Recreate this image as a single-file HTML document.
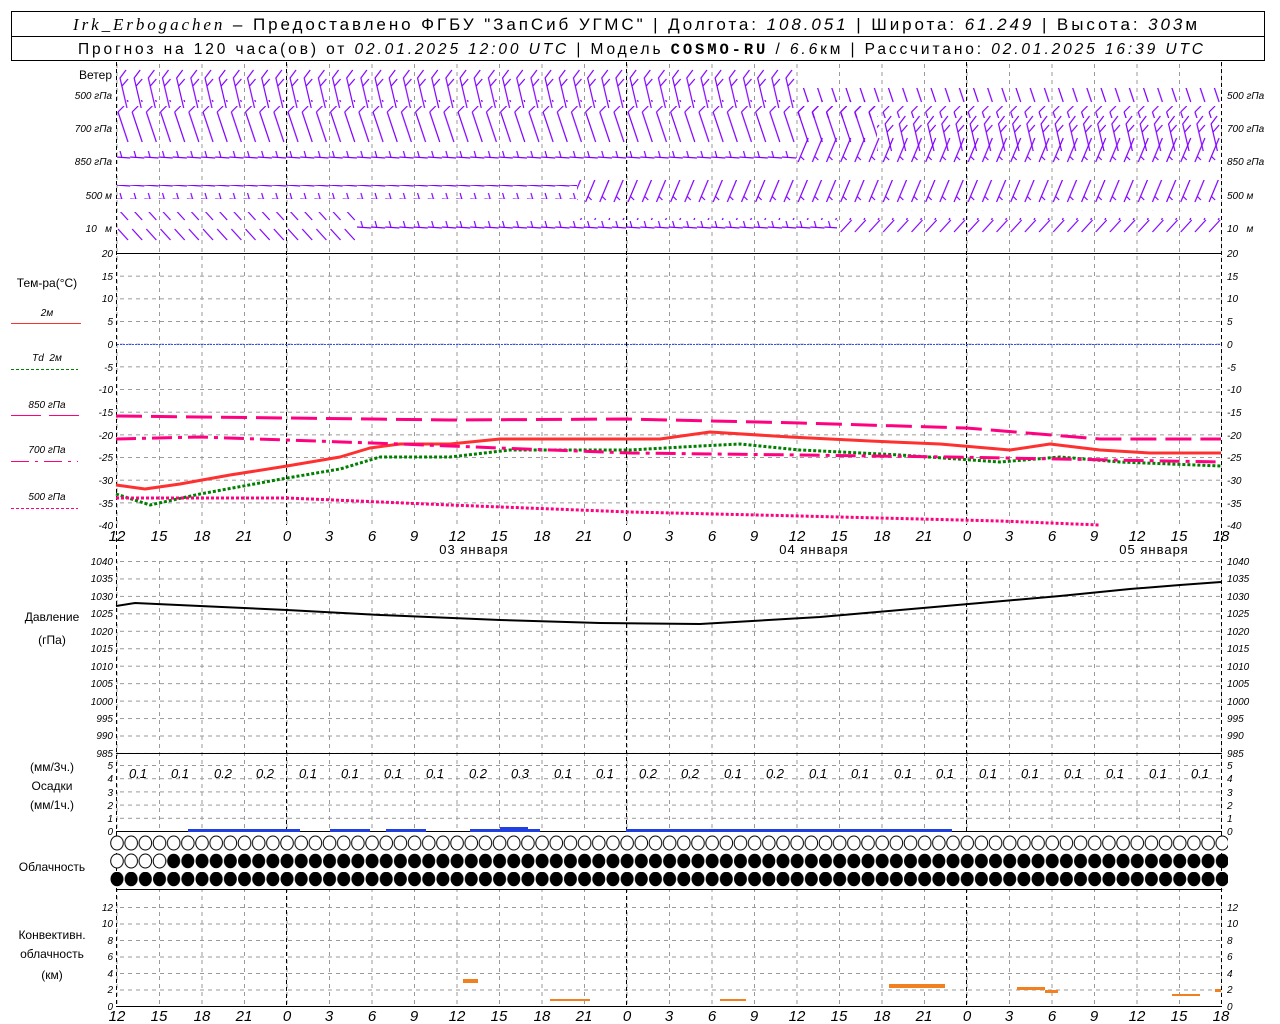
<!DOCTYPE html>
<html><head><meta charset="utf-8"><style>
html,body{margin:0;padding:0;background:#fff;width:1280px;height:1024px;overflow:hidden}
svg{display:block;font-family:"Liberation Sans",sans-serif}
.it{font-style:italic;font-size:10px}
.lb{font-size:12px}
</style></head><body>
<svg width="1280" height="1024" viewBox="0 0 1280 1024" xmlns="http://www.w3.org/2000/svg">
<defs>
<pattern id="vg" x="116.5" y="0" width="42.5" height="8" patternUnits="userSpaceOnUse"><line x1="0.5" y1="0" x2="0.5" y2="4" stroke="#999" stroke-width="1"/></pattern>
<pattern id="hgT" x="0" y="253" width="8" height="22.67" patternUnits="userSpaceOnUse"><line x1="0" y1="0.5" x2="4" y2="0.5" stroke="#999"/></pattern>
<pattern id="hgP" x="0" y="561" width="8" height="17.45" patternUnits="userSpaceOnUse"><line x1="0" y1="0.5" x2="4" y2="0.5" stroke="#999"/></pattern>
<pattern id="hgR" x="0" y="765" width="8" height="13.2" patternUnits="userSpaceOnUse"><line x1="0" y1="0.5" x2="4" y2="0.5" stroke="#999"/></pattern>
<pattern id="hgC" x="0" y="907" width="8" height="16.5" patternUnits="userSpaceOnUse"><line x1="0" y1="0.5" x2="4" y2="0.5" stroke="#999"/></pattern>
<pattern id="bA" x="116" y="66" width="14.17" height="46" patternUnits="userSpaceOnUse"><path d="M11 42 L4 12 L10 4 M6 20 L12 13" stroke="#8000ff" fill="none" stroke-width="1.2"/></pattern>
<pattern id="bB" x="116" y="66" width="14.17" height="40" patternUnits="userSpaceOnUse"><path d="M2 6 L12 36 M2 6 L8 0" stroke="#8000ff" fill="none" stroke-width="1.2"/></pattern>
<pattern id="bC" x="116" y="150" width="14.17" height="14" patternUnits="userSpaceOnUse"><path d="M0 7 L14.17 8 M6 8 L4 1" stroke="#8000ff" fill="none" stroke-width="1.2"/></pattern>
<pattern id="bD" x="116" y="170" width="14.17" height="40" patternUnits="userSpaceOnUse"><path d="M2 32 L12 8 M4 26 L8 30" stroke="#8000ff" fill="none" stroke-width="1.2"/></pattern>
<pattern id="bE" x="116" y="212" width="14.17" height="22" patternUnits="userSpaceOnUse"><path d="M2 20 L13 8" stroke="#8000ff" fill="none" stroke-width="1.2"/></pattern>
<pattern id="bF" x="116" y="228" width="14.17" height="20" patternUnits="userSpaceOnUse"><path d="M2 1 L12 12" stroke="#8000ff" fill="none" stroke-width="1.2"/></pattern>
<pattern id="cE" x="110" y="834" width="14.17" height="18" patternUnits="userSpaceOnUse"><ellipse cx="7" cy="9" rx="6.3" ry="7" fill="#fff" stroke="#000"/></pattern>
<pattern id="cF" x="110" y="834" width="14.17" height="18" patternUnits="userSpaceOnUse"><ellipse cx="7" cy="9" rx="6.5" ry="7.2" fill="#000"/></pattern>
</defs>

<!-- header -->
<rect x="11.5" y="11.5" width="1253" height="49" fill="none" stroke="#000"/>
<line x1="11" y1="36.5" x2="1265" y2="36.5" stroke="#000"/>
<text x="73" y="30" font-size="17" textLength="1124" lengthAdjust="spacing"><tspan font-family="Liberation Serif" font-style="italic">Irk_Erbogachen</tspan> – Предоставлено ФГБУ "ЗапСиб УГМС" | Долгота: <tspan font-style="italic">108.051</tspan> | Широта: <tspan font-style="italic">61.249</tspan> | Высота: <tspan font-style="italic">303</tspan>м</text>
<text x="78" y="54" font-size="15.5" textLength="1125" lengthAdjust="spacing">Прогноз на 120 часа(ов) от <tspan font-style="italic">02.01.2025 12:00 UTC</tspan>  | Модель <tspan font-family="Liberation Mono" font-weight="bold">COSMO-RU</tspan> / <tspan font-style="italic">6.6</tspan>км | Рассчитано: <tspan font-style="italic">02.01.2025 16:39 UTC</tspan></text>

<!-- grids -->
<rect x="116" y="62" width="1106" height="191" fill="url(#vg)"/>
<rect x="116" y="253" width="1106" height="272" fill="url(#vg)"/>
<rect x="117" y="253" width="1104" height="272" fill="url(#hgT)"/>
<rect x="116" y="561" width="1106" height="192" fill="url(#vg)"/>
<rect x="117" y="561" width="1104" height="192" fill="url(#hgP)"/>
<rect x="116" y="753" width="1106" height="78" fill="url(#vg)"/>
<rect x="117" y="765" width="1104" height="66" fill="url(#hgR)"/>
<rect x="116" y="889" width="1106" height="117" fill="url(#vg)"/>
<rect x="117" y="907" width="1104" height="99" fill="url(#hgC)"/>
<g stroke="#000" stroke-dasharray="4,3">
<line x1="116.5" y1="62" x2="116.5" y2="1006"/><line x1="1221.5" y1="62" x2="1221.5" y2="1006"/>
<line x1="286.5" y1="62" x2="286.5" y2="525"/><line x1="626.5" y1="62" x2="626.5" y2="525"/><line x1="966.5" y1="62" x2="966.5" y2="525"/>
<line x1="286.5" y1="561" x2="286.5" y2="831"/><line x1="626.5" y1="561" x2="626.5" y2="831"/><line x1="966.5" y1="561" x2="966.5" y2="831"/>
<line x1="286.5" y1="889" x2="286.5" y2="1006"/><line x1="626.5" y1="889" x2="626.5" y2="1006"/><line x1="966.5" y1="889" x2="966.5" y2="1006"/>
</g>
<g stroke="#000">
<line x1="116" y1="253.5" x2="1222" y2="253.5"/><line x1="116" y1="753.5" x2="1222" y2="753.5"/><line x1="116" y1="831.5" x2="1222" y2="831.5"/><line x1="116" y1="889.5" x2="1222" y2="889.5"/><line x1="116" y1="1006.5" x2="1222" y2="1006.5"/>
</g>
<line x1="117" y1="344.5" x2="1221" y2="344.5" stroke="#3050ff" stroke-dasharray="2,1"/>

<!-- wind -->
<rect x="117" y="66" width="680" height="46" fill="url(#bA)"/>
<rect x="797" y="88" width="424" height="30" fill="url(#bB)"/>
<rect x="117" y="100" width="760" height="44" fill="url(#bB)"/>
<rect x="877" y="115" width="344" height="36" fill="url(#bA)"/>
<rect x="117" y="150" width="680" height="14" fill="url(#bC)"/>
<rect x="797" y="130" width="424" height="40" fill="url(#bD)"/>
<rect x="117" y="185" width="460" height="14" fill="url(#bC)"/>
<rect x="577" y="180" width="644" height="40" fill="url(#bD)"/>
<rect x="117" y="212" width="240" height="34" fill="url(#bF)"/>
<rect x="357" y="221" width="480" height="14" fill="url(#bC)"/>
<rect x="837" y="210" width="384" height="24" fill="url(#bE)"/>

<!-- temperatures -->
<g fill="none" stroke-linejoin="round">
<polyline stroke="#ff3030" stroke-width="3" points="116,485 145,489 180,484 230,475 287,466 340,457 370,448 400,444 450,444 500,439 590,439 660,439 710,432 790,437 870,441 940,444 1010,450 1050,444 1100,450 1150,453 1221,453"/>
<polyline stroke="#008000" stroke-width="3" stroke-dasharray="3,2" points="116,494 150,505 200,494 287,478 340,469 380,457 450,457 510,450 630,450 700,446 740,444 800,450 900,455 1000,462 1060,457 1120,462 1221,466"/>
<polyline stroke="#ff0080" stroke-width="3" stroke-dasharray="26,9" points="116,416 287,418 450,420 626,419 800,423 966,428 1100,439 1221,439"/>
<polyline stroke="#ff0080" stroke-width="3" stroke-dasharray="20,6,4,6" points="116,439 200,437 400,444 500,448 630,453 800,455 950,457 1221,462"/>
<polyline stroke="#ff0080" stroke-width="3" stroke-dasharray="3,2" points="116,498 287,498 450,505 630,512 800,516 1000,521 1100,525"/>
</g>

<!-- pressure -->
<polyline fill="none" stroke="#000" stroke-width="2" points="116,606 135,603 200,606 287,610 380,615 500,620 600,623 700,624 820,617 900,610 980,603 1060,596 1130,589 1180,585 1221,582"/>

<!-- precip bars -->
<g fill="#2040e0">
<rect x="188" y="829" width="112" height="3"/><rect x="330" y="829" width="40" height="3"/><rect x="386" y="829" width="40" height="3"/><rect x="470" y="829" width="70" height="3"/><rect x="500" y="827" width="28" height="5"/><rect x="626" y="829" width="326" height="3"/>
</g>

<!-- clouds -->
<rect x="110" y="834" width="1118" height="18" fill="url(#cE)"/>
<rect x="110" y="853" width="57" height="18" fill="url(#cE)"/>
<rect x="167" y="853" width="1061" height="18" fill="url(#cF)"/>
<rect x="110" y="872" width="1118" height="18" fill="url(#cF)"/>

<!-- convective -->
<g fill="#f08020">
<rect x="463" y="979" width="15" height="4"/><rect x="889" y="984" width="56" height="4"/><rect x="1017" y="987" width="28" height="3"/><rect x="1045" y="990" width="13" height="3"/><rect x="1172" y="994" width="28" height="2"/><rect x="1215" y="989" width="6" height="3"/><rect x="550" y="999" width="40" height="2"/><rect x="720" y="999" width="26" height="2"/>
</g>

<!-- left labels -->
<g class="lb" text-anchor="end">
<text x="112" y="79">Ветер</text>
</g>
<g class="it" text-anchor="end">
<text x="112" y="99">500 гПа</text><text x="112" y="132">700 гПа</text><text x="112" y="165">850 гПа</text><text x="112" y="199">500 м</text><text x="112" y="232">10 &#160; м</text>
</g>
<g class="it" text-anchor="start">
<text x="1227" y="99">500 гПа</text><text x="1227" y="132">700 гПа</text><text x="1227" y="165">850 гПа</text><text x="1227" y="199">500 м</text><text x="1227" y="232">10 &#160; м</text>
</g>
<g class="lb" text-anchor="middle">
<text x="47" y="287">Тем-ра(°C)</text>
<text x="47" y="316" class="it">2м</text>
<text x="47" y="361" class="it">Td &#160;2м</text>
<text x="47" y="408" class="it">850 гПа</text>
<text x="47" y="453" class="it">700 гПа</text>
<text x="47" y="500" class="it">500 гПа</text>
<text x="52" y="621">Давление</text><text x="52" y="644">(гПа)</text>
<text x="52" y="771">(мм/3ч.)</text><text x="52" y="790">Осадки</text><text x="52" y="809">(мм/1ч.)</text>
<text x="52" y="871">Облачность</text>
<text x="52" y="939">Конвективн.</text><text x="52" y="958">облачность</text><text x="52" y="979">(км)</text>
</g>
<line x1="11" y1="323.5" x2="81" y2="323.5" stroke="#ff3030"/>
<line x1="11" y1="369.5" x2="78" y2="369.5" stroke="#008000" stroke-dasharray="3,2"/>
<line x1="11" y1="415.5" x2="81" y2="415.5" stroke="#ff0080" stroke-dasharray="30,8"/>
<line x1="11" y1="461.5" x2="78" y2="461.5" stroke="#ff0080" stroke-dasharray="18,6,3,6"/>
<line x1="11" y1="508.5" x2="78" y2="508.5" stroke="#ff0080" stroke-dasharray="3,2"/>

<!-- y tick labels -->
<g class="it" text-anchor="end">
<text x="113" y="257">20</text><text x="113" y="280">15</text><text x="113" y="302">10</text><text x="113" y="325">5</text><text x="113" y="348">0</text><text x="113" y="371">-5</text><text x="113" y="393">-10</text><text x="113" y="416">-15</text><text x="113" y="439">-20</text><text x="113" y="461">-25</text><text x="113" y="484">-30</text><text x="113" y="507">-35</text><text x="113" y="529">-40</text>
<text x="113" y="565">1040</text><text x="113" y="582">1035</text><text x="113" y="600">1030</text><text x="113" y="617">1025</text><text x="113" y="635">1020</text><text x="113" y="652">1015</text><text x="113" y="670">1010</text><text x="113" y="687">1005</text><text x="113" y="705">1000</text><text x="113" y="722">995</text><text x="113" y="739">990</text><text x="113" y="757">985</text>
<text x="113" y="769">5</text><text x="113" y="782">4</text><text x="113" y="796">3</text><text x="113" y="809">2</text><text x="113" y="822">1</text><text x="113" y="835">0</text>
<text x="113" y="911">12</text><text x="113" y="927">10</text><text x="113" y="944">8</text><text x="113" y="960">6</text><text x="113" y="977">4</text><text x="113" y="993">2</text><text x="113" y="1010">0</text>
</g>
<g class="it" text-anchor="start">
<text x="1227" y="257">20</text><text x="1227" y="280">15</text><text x="1227" y="302">10</text><text x="1227" y="325">5</text><text x="1227" y="348">0</text><text x="1227" y="371">-5</text><text x="1227" y="393">-10</text><text x="1227" y="416">-15</text><text x="1227" y="439">-20</text><text x="1227" y="461">-25</text><text x="1227" y="484">-30</text><text x="1227" y="507">-35</text><text x="1227" y="529">-40</text>
<text x="1227" y="565">1040</text><text x="1227" y="582">1035</text><text x="1227" y="600">1030</text><text x="1227" y="617">1025</text><text x="1227" y="635">1020</text><text x="1227" y="652">1015</text><text x="1227" y="670">1010</text><text x="1227" y="687">1005</text><text x="1227" y="705">1000</text><text x="1227" y="722">995</text><text x="1227" y="739">990</text><text x="1227" y="757">985</text>
<text x="1227" y="769">5</text><text x="1227" y="782">4</text><text x="1227" y="796">3</text><text x="1227" y="809">2</text><text x="1227" y="822">1</text><text x="1227" y="835">0</text>
<text x="1227" y="911">12</text><text x="1227" y="927">10</text><text x="1227" y="944">8</text><text x="1227" y="960">6</text><text x="1227" y="977">4</text><text x="1227" y="993">2</text><text x="1227" y="1010">0</text>
</g>

<!-- precip amounts -->
<g font-size="13" font-style="italic" text-anchor="middle">
<text x="138" y="778">0.1</text><text x="180" y="778">0.1</text><text x="223" y="778">0.2</text><text x="265" y="778">0.2</text><text x="308" y="778">0.1</text><text x="350" y="778">0.1</text><text x="393" y="778">0.1</text><text x="435" y="778">0.1</text><text x="478" y="778">0.2</text><text x="520" y="778">0.3</text><text x="563" y="778">0.1</text><text x="605" y="778">0.1</text><text x="648" y="778">0.2</text><text x="690" y="778">0.2</text><text x="733" y="778">0.1</text><text x="775" y="778">0.2</text><text x="818" y="778">0.1</text><text x="860" y="778">0.1</text><text x="903" y="778">0.1</text><text x="945" y="778">0.1</text><text x="988" y="778">0.1</text><text x="1030" y="778">0.1</text><text x="1073" y="778">0.1</text><text x="1115" y="778">0.1</text><text x="1158" y="778">0.1</text><text x="1200" y="778">0.1</text>
</g>

<!-- x labels -->
<g font-size="15" font-style="italic" text-anchor="middle">
<text x="117" y="541">12</text><text x="159" y="541">15</text><text x="202" y="541">18</text><text x="244" y="541">21</text><text x="287" y="541">0</text><text x="329" y="541">3</text><text x="372" y="541">6</text><text x="414" y="541">9</text><text x="457" y="541">12</text><text x="499" y="541">15</text><text x="542" y="541">18</text><text x="584" y="541">21</text><text x="627" y="541">0</text><text x="669" y="541">3</text><text x="712" y="541">6</text><text x="754" y="541">9</text><text x="797" y="541">12</text><text x="839" y="541">15</text><text x="882" y="541">18</text><text x="924" y="541">21</text><text x="967" y="541">0</text><text x="1009" y="541">3</text><text x="1052" y="541">6</text><text x="1094" y="541">9</text><text x="1137" y="541">12</text><text x="1179" y="541">15</text><text x="1221" y="541">18</text>
<text x="117" y="1021">12</text><text x="159" y="1021">15</text><text x="202" y="1021">18</text><text x="244" y="1021">21</text><text x="287" y="1021">0</text><text x="329" y="1021">3</text><text x="372" y="1021">6</text><text x="414" y="1021">9</text><text x="457" y="1021">12</text><text x="499" y="1021">15</text><text x="542" y="1021">18</text><text x="584" y="1021">21</text><text x="627" y="1021">0</text><text x="669" y="1021">3</text><text x="712" y="1021">6</text><text x="754" y="1021">9</text><text x="797" y="1021">12</text><text x="839" y="1021">15</text><text x="882" y="1021">18</text><text x="924" y="1021">21</text><text x="967" y="1021">0</text><text x="1009" y="1021">3</text><text x="1052" y="1021">6</text><text x="1094" y="1021">9</text><text x="1137" y="1021">12</text><text x="1179" y="1021">15</text><text x="1221" y="1021">18</text>
</g>
<g font-size="13" text-anchor="middle" letter-spacing="1">
<text x="474" y="554">03 января</text><text x="814" y="554">04 января</text><text x="1154" y="554">05 января</text>
</g>
</svg>
</body></html>
